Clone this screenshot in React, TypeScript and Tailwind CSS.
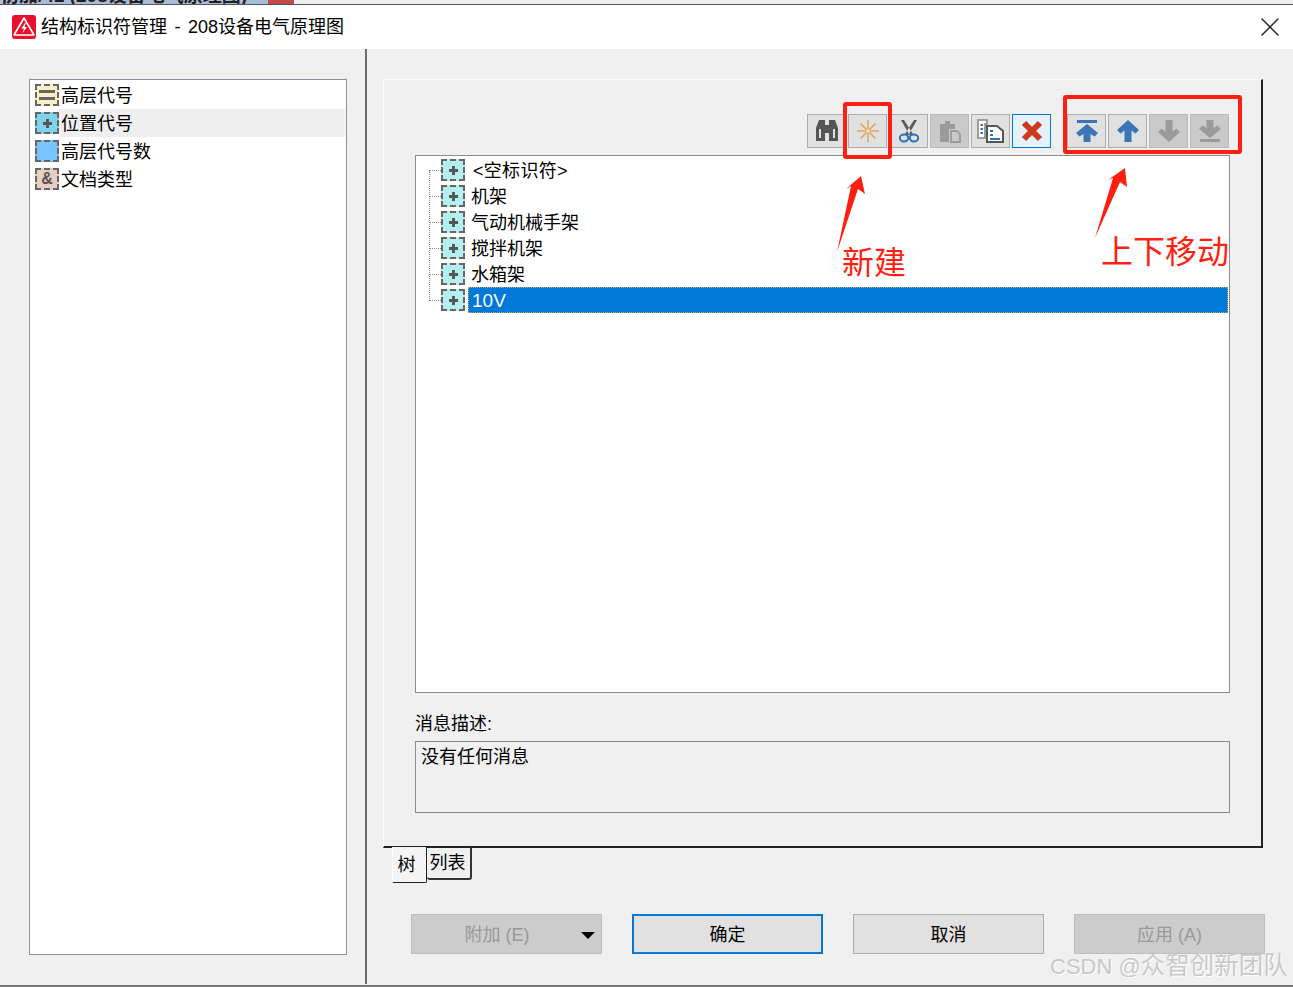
import React, {FC, ReactNode} from "react";
import {X} from "lucide-react";

const FONT = "font-['Liberation_Sans','Noto_Sans_CJK_SC',sans-serif]";

const AppLogo = () => (
  <svg width="24" height="24" viewBox="0 0 24 24" className="shrink-0">
    <rect width="24" height="24" rx="3" fill="#e8112d" />
    <path d="M12 3 L22 20 H2 Z" fill="none" stroke="#fff" strokeWidth="1.6" strokeLinejoin="round" />
    <path d="M13 8 L9.5 13.5 H12 L10.5 18 L15 12 H12.5 L14 8 Z" fill="#fff" />
  </svg>
);

// dashed tree / list node marker
const NodeIcon: FC<{bg: string; children?: ReactNode}> = ({bg, children}) => (
  <div className={`w-6 h-[22px] shrink-0 border-2 border-dashed border-[#666] flex items-center justify-center text-[#555] ${bg}`}>
    {children}
  </div>
);

const Plus = () => (
  <svg width="9" height="9" viewBox="0 0 10 10">
    <path d="M5 0 V10 M0 5 H10" stroke="#555" strokeWidth="3.2" />
  </svg>
);

const Equals = () => (
  <svg width="16" height="12" viewBox="0 0 16 12">
    <path d="M0 2.5 H16 M0 9.5 H16" stroke="#666" strokeWidth="3" />
  </svg>
);

const sideItems = [
  {label: "高层代号", bg: "bg-[#fdeec4]", icon: <Equals />},
  {label: "位置代号", bg: "bg-[#7fd3ea]", icon: <Plus />, hover: true},
  {label: "高层代号数", bg: "bg-[#79c4fe]"},
  {label: "文档类型", bg: "bg-[#e8cfc2]", icon: <span className="text-[16px] font-bold leading-none">&amp;</span>},
];

const treeItems = ["机架", "气动机械手架", "搅拌机架", "水箱架"];

const Binoculars = () => (
  <svg width="24" height="24" viewBox="0 0 24 24">
    <path d="M4 1 H10 V22 H1 V9 Z M14 1 H20 L23 9 V22 H14 Z" fill="#555" />
    <rect x="10" y="6" width="4" height="8" fill="#555" />
    <path d="M5 10 V19 M19 10 V19" stroke="#fff" strokeWidth="1.6" />
  </svg>
);

const Spark = () => (
  <svg width="24" height="24" viewBox="0 0 24 24">
    <path d="M12 1 V23 M1 12 H23 M4.5 4.5 L19.5 19.5 M19.5 4.5 L4.5 19.5" stroke="#e3a64e" strokeWidth="1.5" />
    <circle cx="12" cy="12" r="1.8" fill="#e8e8e8" />
  </svg>
);

const Scissors = () => (
  <svg width="24" height="24" viewBox="0 0 24 24">
    <path d="M4 1 L7 1 L16 15 L13 17 Z M20 1 L17 1 L8 15 L11 17 Z" fill="#5c5c5c" />
    <ellipse cx="7" cy="19" rx="4.2" ry="3.4" fill="none" stroke="#2f72b8" strokeWidth="2" />
    <ellipse cx="17" cy="19" rx="4.2" ry="3.4" fill="none" stroke="#2f72b8" strokeWidth="2" />
  </svg>
);

const Paste = () => (
  <svg width="24" height="24" viewBox="0 0 24 24">
    <path d="M2 5 H7 V2 H12 V5 H17 V10 H11 V23 H2 Z" fill="#9b9b9b" />
    <path d="M13 12 H19 L22 15 V23 H13 Z" fill="#cacaca" stroke="#9b9b9b" strokeWidth="1.8" />
  </svg>
);

const Copy = () => (
  <svg width="28" height="24" viewBox="0 0 28 24">
    <path d="M1 1 H10 V5 H8 V19 H1 Z" fill="#fff" stroke="#888" strokeWidth="1.6" />
    <path d="M3.5 6 H6 M3.5 10 H6 M3.5 14 H6" stroke="#2f72b8" strokeWidth="1.8" />
    <path d="M10 7 H20 L26 12 V23 H10 Z" fill="#fff" stroke="#555" strokeWidth="2" />
    <path d="M13 12 H16 M13 16 H16 M13 20 H23" stroke="#2f72b8" strokeWidth="1.8" />
  </svg>
);

const Cross = () => (
  <svg width="24" height="24" viewBox="0 0 24 24">
    <path d="M4 4 L20 20 M20 4 L4 20" stroke="#cc3b1d" strokeWidth="6" />
  </svg>
);

const Arrow: FC<{color: string; down?: boolean; bar?: boolean}> = ({color, down, bar}) => (
  <svg width="24" height="24" viewBox="0 0 24 24" className={down ? "rotate-180" : ""}>
    {bar && <rect x="2" y="1" width="20" height="3" fill={color} />}
    <path
      d={bar
        ? "M12 5 L23 14 L19.5 17.5 L15.5 15 V23 H8.5 V15 L4.5 17.5 L1 14 Z"
        : "M12 1 L23 11 L19.5 14.5 L15.5 11.5 V23 H8.5 V11.5 L4.5 14.5 L1 11 Z"}
      fill={color}
    />
  </svg>
);

const ToolButton: FC<{children: ReactNode; disabled?: boolean; active?: boolean}> = ({children, disabled, active}) => {
  let look = "bg-[#e1e1e1] border-[#adadad]";
  if (disabled) look = "bg-[#cacaca] border-[#bbbbbb]";
  if (active) look = "bg-[#e5f1fb] border-[#0078d7]";
  return (
    <div className={`w-[39px] h-[34px] border flex items-center justify-center ${look}`}>
      {children}
    </div>
  );
};

const FootButton: FC<{children: ReactNode; kind?: "disabled" | "primary"; className?: string}> = ({children, kind, className}) => {
  let look = "bg-[#e1e1e1] border border-[#adadad] text-black";
  if (kind === "disabled") look = "bg-[#cccccc] border border-[#bfbfbf] text-[#999]";
  if (kind === "primary") look = "bg-[#e1e1e1] border-2 border-[#0078d7] text-black";
  return (
    <div className={`w-[191px] h-10 pt-[2px] flex items-center justify-center text-[18px] ${look} ${className ?? ""}`}>
      {children}
    </div>
  );
};

const Annotations = () => (
  <>
    <div className="absolute left-[843px] top-[102px] w-[49px] h-[57px] border-4 border-[#ff1f10] rounded-[3px]" />
    <div className="absolute left-[1063px] top-[95px] w-[179px] h-[59px] border-4 border-[#ff1f10] rounded-[3px]" />
    <svg width="1293" height="987" className="absolute left-0 top-0 pointer-events-none">
      <polygon points="861,176 865,194 858,189 837,252 851,186 846,189" fill="#ff1f10" />
      <polygon points="1125,168 1127,187 1120,182 1095,238 1113,178 1108,180" fill="#ff1f10" />
    </svg>
    <span className="absolute left-[842px] top-[240px] text-[32px] leading-[46px] text-[#ff1f10]">新建</span>
    <span className="absolute left-[1101px] top-[229px] text-[32px] leading-[46px] text-[#ff1f10]">上下移动</span>
    <span className="absolute left-[1050px] top-[948px] text-[24.5px] leading-[36px] text-[#c9c9c9] whitespace-nowrap [text-shadow:1px_1px_0_#fff]">
      <span className="text-[22px]">CSDN @</span>众智创新团队
    </span>
  </>
);

export default function App() {
  return (
    <div className={`relative w-[1293px] h-[987px] overflow-hidden bg-[#f0f0f0] flex flex-col text-black ${FONT}`}>
      {/* window behind the dialog */}
      <div className="h-[4px] bg-[#a9bcd6] overflow-hidden flex shrink-0">
        <span className="w-[268px] text-[19px] leading-[20px] -mt-[14px] font-bold whitespace-nowrap text-[#222]">初加/41 (208设备电气原理图)</span>
        <div className="w-[26px] bg-[#c24a4a]" />
        <div className="flex-1 bg-[#f0f0f0]" />
      </div>
      <div className="h-[1px] bg-[#555] shrink-0" />

      <div className="h-[44px] bg-white flex items-center pl-3 pr-[7px] shrink-0">
        <AppLogo />
        <span className="ml-[5px] text-[18px] [word-spacing:2.5px]">结构标识符管理 - 208设备电气原理图</span>
        <X size={32} strokeWidth={1} className="ml-auto text-[#222]" />
      </div>

      <div className="flex-1 flex min-h-0">
        {/* left nav */}
        <div className="w-[365px] pl-[29px] pr-[18px] pt-[30px] pb-[30px] shrink-0">
          <div className="h-full bg-white border border-[#8e8e9a] pt-[1px] px-[5px]">
            {sideItems.map(item => (
              <div key={item.label} className="h-[28px] flex items-center">
                <NodeIcon bg={item.bg}>{item.icon}</NodeIcon>
                <div className={`flex-1 h-full flex items-center text-[18px] pl-[2px] pt-[2px] -mr-[4px] ${item.hover ? "bg-[#efefef]" : ""}`}>
                  {item.label}
                </div>
              </div>
            ))}
          </div>
        </div>
        <div className="w-[2px] bg-[#6d6d6d] shrink-0 mb-[1px]" />

        {/* right pane */}
        <div className="flex-1 pl-[16px] pt-[30px] flex flex-col min-w-0">
          <div className="w-[880px] h-[769px] border border-[#fcfcfc] border-r-2 border-b-2 border-r-[#222] border-b-[#222] pt-[34px] pl-[31px] flex flex-col">
            <div className="w-[814px] flex justify-end gap-[2px]">
              <ToolButton><Binoculars /></ToolButton>
              <ToolButton><Spark /></ToolButton>
              <ToolButton><Scissors /></ToolButton>
              <ToolButton disabled><Paste /></ToolButton>
              <ToolButton><Copy /></ToolButton>
              <ToolButton active><Cross /></ToolButton>
              <div className="w-[12px]" />
              <ToolButton><Arrow color="#3a75b5" bar /></ToolButton>
              <ToolButton><Arrow color="#3a75b5" /></ToolButton>
              <ToolButton disabled><Arrow color="#9b9b9b" down /></ToolButton>
              <ToolButton disabled><Arrow color="#9b9b9b" down bar /></ToolButton>
            </div>

            <div className="relative w-[815px] h-[538px] mt-[7px] bg-white border border-[#8c8c8c] pt-[1px] pl-[25px] pr-[1px]">
              <div className="absolute left-[13px] top-[15px] h-[130px] border-l border-dotted border-[#888]" />
              <div className="h-[26px] flex items-center">
                <div className="w-3 border-t border-dotted border-[#888] -ml-3" />
                <NodeIcon bg="bg-[#b4eff0]"><Plus /></NodeIcon>
                <span className="ml-[8px] pt-[2px] text-[18px] tracking-[0.3px]">&lt;空标识符&gt;</span>
              </div>
              {treeItems.map(name => (
                <div key={name} className="h-[26px] flex items-center">
                  <div className="w-3 border-t border-dotted border-[#888] -ml-3" />
                  <NodeIcon bg="bg-[#b4eff0]"><Plus /></NodeIcon>
                  <span className="ml-[6px] pt-[2px] text-[18px]">{name}</span>
                </div>
              ))}
              <div className="h-[26px] flex items-center">
                <div className="w-3 border-t border-dotted border-[#888] -ml-3" />
                <NodeIcon bg="bg-[#b4eff0]"><Plus /></NodeIcon>
                <div className="ml-[3px] flex-1 h-full bg-[#0078d7] border border-dotted border-[#c9a26a] text-white text-[19px] pl-[3px] pt-[2px] flex items-center">10V</div>
              </div>
            </div>

            <div className="mt-[18px] h-[26px] leading-[26px] text-[18px]">消息描述:</div>
            <div className="mt-[4px] w-[815px] h-[72px] border border-[#8c8c8c] px-[5px] pt-[2px] text-[18px]">没有任何消息</div>
          </div>

          {/* tabs */}
          <div className="flex h-[36px] pl-[9px] -mt-[1px] relative">
            <div className="w-[35px] h-[36px] bg-[#f4f4f4] border-r border-b border-r-[#222] border-b-[#222] border-l border-l-white rounded-b-[2px] flex items-center justify-center text-[18px] pr-[6px] pt-[2px]">树</div>
            <div className="w-[45px] h-[33px] border-r-2 border-b-2 border-t border-t-[#222] border-r-[#333] border-b-[#333] rounded-b-[3px] flex items-center justify-center text-[18px] pr-[2px]">列表</div>
          </div>

          <div className="mt-[31px] pl-[28px] flex gap-[30px]">
            <FootButton kind="disabled" className="relative">
              <span className="-ml-[19px]">附加 (E)</span>
              <div className="absolute right-[6px] top-[17px] w-0 h-0 border-x-[7px] border-x-transparent border-t-[7px] border-t-black" />
            </FootButton>
            <FootButton kind="primary">确定</FootButton>
            <FootButton>取消</FootButton>
            <FootButton kind="disabled">应用 (A)</FootButton>
          </div>
        </div>
      </div>
      <div className="h-[2px] bg-[#777] shrink-0" />

      <Annotations />
    </div>
  );
}
